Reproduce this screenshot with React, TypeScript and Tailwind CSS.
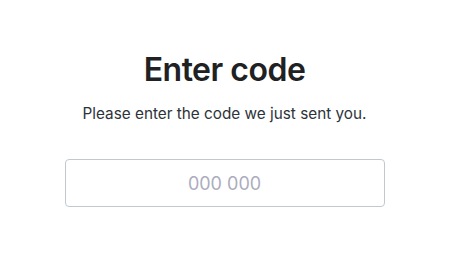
export default function App() {
  return (
    <div
      className="min-h-screen w-full bg-white flex flex-col items-center pt-[50px]"
      style={{ fontFamily: "Inter, 'Noto Sans', sans-serif" }}
    >
      <h1 className="text-[32px] leading-[40px] font-semibold text-[#202123] tracking-[-0.5px]">
        Enter code
      </h1>
      <p className="mt-[12px] text-[15.3px] leading-[24px] text-[#2d333a]">
        Please enter the code we just sent you.
      </p>
      <input
        type="text"
        placeholder="000 000"
        className="mt-[33px] w-[320px] h-[48px] rounded-[4px] border border-[#c2c8d0] text-center text-[18px] text-[#2d333a] placeholder:text-[#acacbe] outline-none"
      />
    </div>
  );
}
